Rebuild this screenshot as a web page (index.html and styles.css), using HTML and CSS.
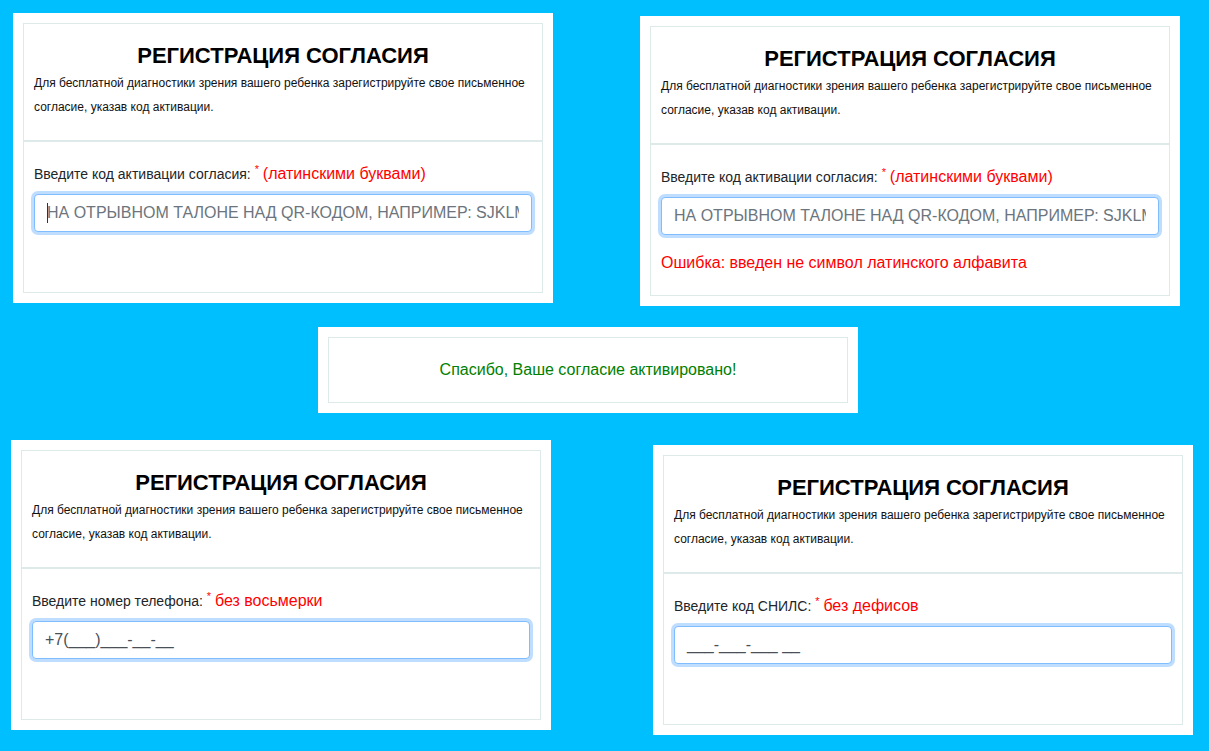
FILE: index.html
```html
<!DOCTYPE html>
<html lang="ru">
<head>
<meta charset="utf-8">
<title>Регистрация согласия</title>
<link rel="stylesheet" href="styles.css">
</head>
<body>
<div class="canvas">

  <section class="shot shot-1">
    <div class="card">
      <div class="card-head">
        <h2 class="title">РЕГИСТРАЦИЯ СОГЛАСИЯ</h2>
        <p class="desc">Для бесплатной диагностики зрения вашего ребенка зарегистрируйте свое письменное согласие, указав код активации.</p>
      </div>
      <div class="card-body">
        <label class="label">Введите код активации согласия: <sup class="req">*</sup> <span class="hint">(латинскими буквами)</span></label>
        <div class="input focus"><span class="caret"></span><span class="placeholder">НА ОТРЫВНОМ ТАЛОНЕ НАД QR-КОДОМ, НАПРИМЕР: SJKLM</span></div>
      </div>
    </div>
  </section>

  <section class="shot shot-2">
    <div class="card">
      <div class="card-head">
        <h2 class="title">РЕГИСТРАЦИЯ СОГЛАСИЯ</h2>
        <p class="desc">Для бесплатной диагностики зрения вашего ребенка зарегистрируйте свое письменное согласие, указав код активации.</p>
      </div>
      <div class="card-body">
        <label class="label">Введите код активации согласия: <sup class="req">*</sup> <span class="hint">(латинскими буквами)</span></label>
        <div class="input focus"><span class="placeholder">НА ОТРЫВНОМ ТАЛОНЕ НАД QR-КОДОМ, НАПРИМЕР: SJKLM</span></div>
        <div class="error">Ошибка: введен не символ латинского алфавита</div>
      </div>
    </div>
  </section>

  <section class="shot shot-3">
    <div class="card card-thanks">
      <p class="thanks">Спасибо, Ваше согласие активировано!</p>
    </div>
  </section>

  <section class="shot shot-4">
    <div class="card">
      <div class="card-head">
        <h2 class="title">РЕГИСТРАЦИЯ СОГЛАСИЯ</h2>
        <p class="desc">Для бесплатной диагностики зрения вашего ребенка зарегистрируйте свое письменное согласие, указав код активации.</p>
      </div>
      <div class="card-body">
        <label class="label">Введите номер телефона: <sup class="req">*</sup> <span class="hint">без восьмерки</span></label>
        <div class="input focus"><span class="value">+7(___)___-__-__</span></div>
      </div>
    </div>
  </section>

  <section class="shot shot-5">
    <div class="card">
      <div class="card-head">
        <h2 class="title">РЕГИСТРАЦИЯ СОГЛАСИЯ</h2>
        <p class="desc">Для бесплатной диагностики зрения вашего ребенка зарегистрируйте свое письменное согласие, указав код активации.</p>
      </div>
      <div class="card-body">
        <label class="label">Введите код СНИЛС: <sup class="req">*</sup> <span class="hint">без дефисов</span></label>
        <div class="input focus"><span class="value">___-___-___ __</span></div>
      </div>
    </div>
  </section>

</div>
</body>
</html>
```
FILE: styles.css
```css
* { box-sizing: border-box; }

html, body {
  margin: 0;
  padding: 0;
}

body {
  background: #00bfff;
  font-family: "Liberation Sans", Arial, sans-serif;
  font-size: 16px;
  line-height: 1.5;
  color: #212529;
}

.canvas {
  position: relative;
  width: 1209px;
  height: 751px;
  overflow: hidden;
}

.shot {
  position: absolute;
  width: 540px;
  background: #fff;
  padding: 10px;
}

.shot-1 { left: 13px; top: 13px; }
.shot-2 { left: 640px; top: 16px; }
.shot-3 { left: 318px; top: 327px; }
.shot-4 { left: 11px; top: 440px; }
.shot-5 { left: 653px; top: 445px; }

.card {
  height: 270px;
  border: 1px solid #deeaea;
  display: flex;
  flex-direction: column;
}

.card-head {
  padding: 20px 10px 21px;
  border-bottom: 2px solid #deeaea;
}

.title {
  margin: 0;
  text-align: center;
  font-size: 22px;
  line-height: 24px;
  font-weight: 700;
  color: #000;
}

.desc {
  margin: 3px 0 0;
  font-size: 12px;
  line-height: 24px;
  color: #111;
}

.card-body {
  padding: 20px 10px 0;
}

.label {
  display: block;
  font-size: 14px;
  line-height: 24px;
  margin-bottom: 8px;
  color: #212529;
}

.req {
  color: #ff0000;
  font-size: 11px;
  line-height: 0;
}

.hint {
  color: #ff0000;
  font-size: 16px;
}

.input {
  position: relative;
  height: 38px;
  padding: 6px 12px;
  border: 1px solid #ced4da;
  border-radius: 4px;
  font-size: 16px;
  line-height: 24px;
  white-space: nowrap;
  color: #495057;
  background: #fff;
}

.input.focus {
  border-color: #80bdff;
  box-shadow: 0 0 0 3px rgba(0, 123, 255, 0.25);
}

.placeholder {
  display: block;
  overflow: hidden;
  color: #6c757d;
}

.caret {
  position: absolute;
  left: 12px;
  top: 8px;
  width: 1px;
  height: 20px;
  background: #333;
}

.error {
  margin-top: 16px;
  color: #ff0000;
  font-size: 16px;
  line-height: 24px;
}

.card-thanks {
  height: 66px;
  align-items: center;
  justify-content: center;
}

.thanks {
  margin: 0;
  color: #008000;
  font-size: 16px;
  line-height: 24px;
}
```
